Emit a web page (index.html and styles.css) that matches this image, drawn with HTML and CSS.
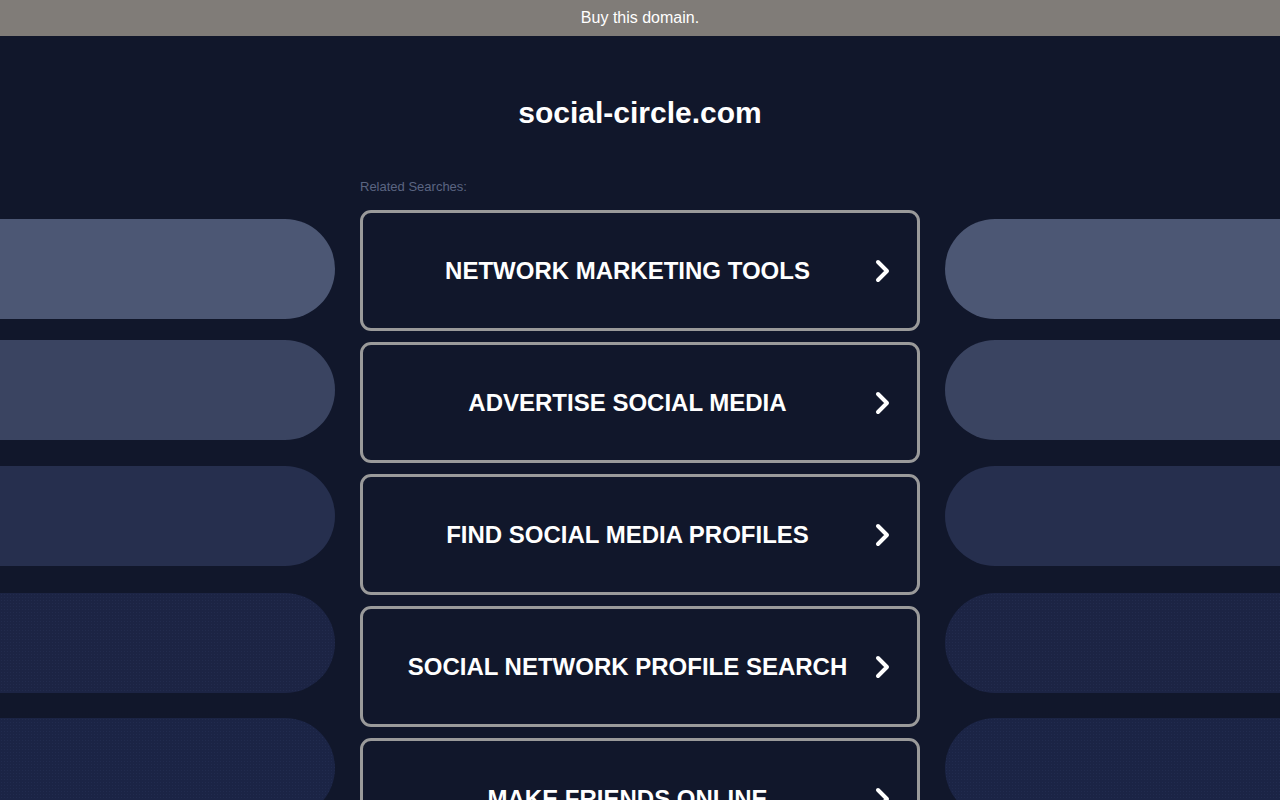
FILE: index.html
```html
<!DOCTYPE html>
<html lang="en">
  <head>
    <meta charset="UTF-8" />
    <meta name="viewport" content="width=device-width, initial-scale=1.0" />
    <title>social-circle.com</title>
    <link rel="stylesheet" href="styles.css">
  </head>
  <body>
    <div class="topBar">
      <a href="#" class="buyLink">Buy this domain.</a>
    </div>

    <h1 class="domainTitle">social-circle.com</h1>

    <div class="searchLayout">
      <div class="sideColumn left">
        <div class="pill pill1"></div>
        <div class="pill pill2"></div>
        <div class="pill pill3"></div>
        <div class="pill pill4 dotted"></div>
        <div class="pill pill5 dotted"></div>
      </div>

      <div class="centerColumn">
        <p class="relatedLabel">Related Searches:</p>
        <ul class="searchList">
          <li>
            <a href="#" class="searchCard">
              <span class="searchText">NETWORK MARKETING TOOLS</span>
              <svg class="chevron" viewBox="0 0 20 28" width="20" height="28"><path d="M6 5 L15 14 L6 23" /></svg>
            </a>
          </li>
          <li>
            <a href="#" class="searchCard">
              <span class="searchText">ADVERTISE SOCIAL MEDIA</span>
              <svg class="chevron" viewBox="0 0 20 28" width="20" height="28"><path d="M6 5 L15 14 L6 23" /></svg>
            </a>
          </li>
          <li>
            <a href="#" class="searchCard">
              <span class="searchText">FIND SOCIAL MEDIA PROFILES</span>
              <svg class="chevron" viewBox="0 0 20 28" width="20" height="28"><path d="M6 5 L15 14 L6 23" /></svg>
            </a>
          </li>
          <li>
            <a href="#" class="searchCard">
              <span class="searchText">SOCIAL NETWORK PROFILE SEARCH</span>
              <svg class="chevron" viewBox="0 0 20 28" width="20" height="28"><path d="M6 5 L15 14 L6 23" /></svg>
            </a>
          </li>
          <li>
            <a href="#" class="searchCard">
              <span class="searchText">MAKE FRIENDS ONLINE</span>
              <svg class="chevron" viewBox="0 0 20 28" width="20" height="28"><path d="M6 5 L15 14 L6 23" /></svg>
            </a>
          </li>
        </ul>
      </div>

      <div class="sideColumn right">
        <div class="pill pill1"></div>
        <div class="pill pill2"></div>
        <div class="pill pill3"></div>
        <div class="pill pill4 dotted"></div>
        <div class="pill pill5 dotted"></div>
      </div>
    </div>
  </body>
</html>
```

FILE: styles.css
```css
body {
  margin: 0;
  font-family: "Liberation Sans", Arial, sans-serif;
  background-color: #11172b;
  color: #fff;
  overflow: hidden;
}

.topBar {
  height: 36px;
  background-color: #807c78;
  display: flex;
  align-items: center;
  justify-content: center;
}

.buyLink {
  color: #fff;
  font-size: 16px;
  text-decoration: none;
}

.domainTitle {
  margin: 59px 0 0;
  font-size: 30px;
  line-height: 36px;
  text-align: center;
  color: #fff;
}

.searchLayout {
  display: grid;
  grid-template-columns: 335px 560px 335px;
  column-gap: 25px;
  margin-top: 47px;
}

.centerColumn {
  display: flex;
  flex-direction: column;
}

.relatedLabel {
  margin: 0 0 16px;
  padding-top: 1px;
  font-size: 13px;
  line-height: 15px;
  color: #5b6582;
}

.searchList {
  list-style: none;
  margin: 0;
  padding: 0;
  display: flex;
  flex-direction: column;
  gap: 11px;
}

.searchCard {
  height: 115px;
  box-sizing: content-box;
  display: flex;
  align-items: center;
  padding: 1px 25px 0 20px;
  height: 114px;
  border: 3px solid #9a9a9a;
  border-radius: 11px;
  color: #fff;
  text-decoration: none;
}

.searchText {
  flex: 1;
  text-align: center;
  font-size: 24px;
  font-weight: bold;
}

.chevron {
  display: block;
}

.chevron path {
  fill: none;
  stroke: #fff;
  stroke-width: 4;
  stroke-linecap: round;
  stroke-linejoin: round;
}

/* decorative pills on both sides of the list */
.sideColumn {
  display: flex;
  flex-direction: column;
  padding-top: 41px;
}

.pill {
  height: 100px;
  flex-shrink: 0;
}

.left .pill {
  border-radius: 0 50px 50px 0;
}

.right .pill {
  border-radius: 50px 0 0 50px;
}

.pill1 { background-color: #4c5774; }
.pill2 { background-color: #3a4461; margin-top: 21px; }
.pill3 { background-color: #262f4e; margin-top: 26px; }
.pill4 { background-color: #1c2444; margin-top: 27px; }
.pill5 { background-color: #1b2445; margin-top: 25px; }

.dotted {
  background-image: radial-gradient(rgba(60, 75, 115, 0.18) 0.6px, transparent 0.8px);
  background-size: 3px 3px;
}
```
